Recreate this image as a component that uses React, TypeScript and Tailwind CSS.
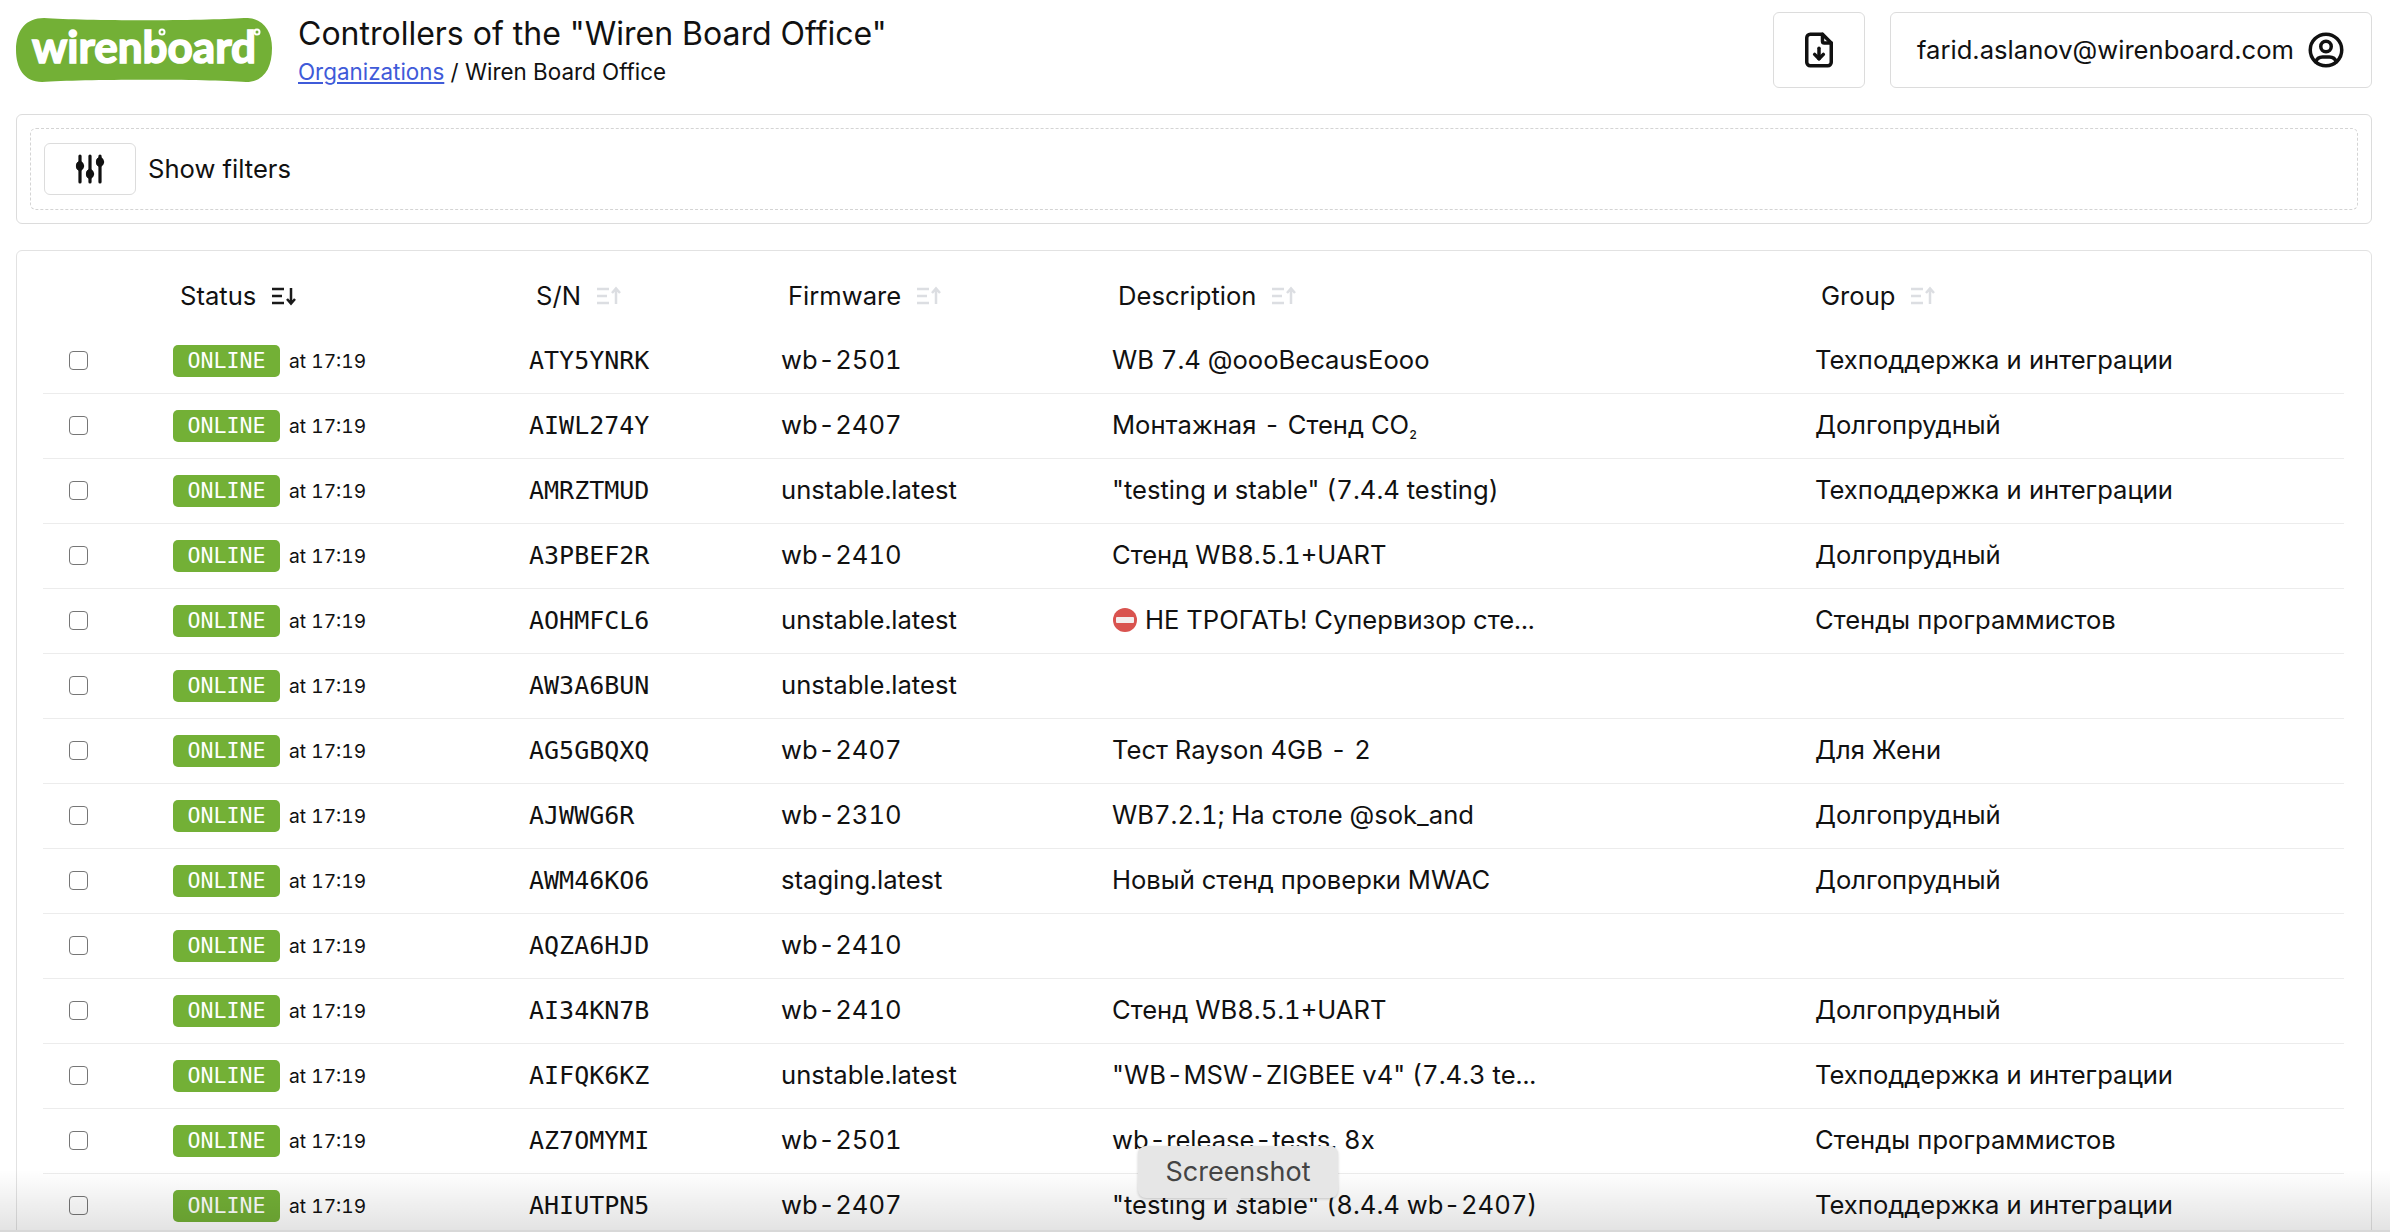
import { Fragment } from "react";
import type { ReactNode } from "react";
import { TbFileDownload, TbUserCircle } from "react-icons/tb";

function H({ t }: { t: string }) {
  const parts = t.split("-");
  return (
    <>
      {parts.map((p, i) => (
        <Fragment key={i}>
          {i > 0 && <span className="mx-[0.5px]">-</span>}
          {p}
        </Fragment>
      ))}
    </>
  );
}

const rows: [string, string, ReactNode, string][] = [
  ["ATY5YNRK", "wb-2501", "WB 7.4 @oooBecausEooo", "Техподдержка и интеграции"],
  ["AIWL274Y", "wb-2407", <><H t="Монтажная - Стенд CO" /><sub className="relative top-[5px] text-[12px] font-medium">2</sub></>, "Долгопрудный"],
  ["AMRZTMUD", "unstable.latest", "\"testing и stable\" (7.4.4 testing)", "Техподдержка и интеграции"],
  ["A3PBEF2R", "wb-2410", "Стенд WB8.5.1+UART", "Долгопрудный"],
  ["AOHMFCL6", "unstable.latest", <span className="flex items-center gap-[8px]"><NoEntry />НЕ ТРОГАТЬ! Супервизор сте...</span>, "Стенды программистов"],
  ["AW3A6BUN", "unstable.latest", "", ""],
  ["AG5GBQXQ", "wb-2407", <H t="Тест Rayson 4GB - 2" />, "Для Жени"],
  ["AJWWG6R", "wb-2310", "WB7.2.1; На столе @sok_and", "Долгопрудный"],
  ["AWM46KO6", "staging.latest", "Новый стенд проверки MWAC", "Долгопрудный"],
  ["AQZA6HJD", "wb-2410", "", ""],
  ["AI34KN7B", "wb-2410", "Стенд WB8.5.1+UART", "Долгопрудный"],
  ["AIFQK6KZ", "unstable.latest", <H t={"\"WB-MSW-ZIGBEE v4\" (7.4.3 te..."} />, "Техподдержка и интеграции"],
  ["AZ7OMYMI", "wb-2501", <H t="wb-release-tests, 8x" />, "Стенды программистов"],
  ["AHIUTPN5", "wb-2407", <H t={"\"testing и stable\" (8.4.4 wb-2407)"} />, "Техподдержка и интеграции"],
];

function NoEntry() {
  return (
    <svg width="24" height="24" viewBox="0 0 24 24" className="ml-[1px] shrink-0">
      <circle cx="12" cy="12" r="12" fill="#d9534f" />
      <rect x="3" y="9" width="18" height="6" rx="1" fill="#f3eeee" />
    </svg>
  );
}

function SortIcon({ active }: { active?: boolean }) {
  const c = active ? "#1a1a1a" : "#dcdee2";
  return (
    <svg width="26" height="20" viewBox="0 0 26 20" fill="none" stroke={c} strokeWidth="2.5" className="shrink-0">
      <path d="M1 3h12M1 10h10M1 17h12" />
      {active ? <path d="M20 2v15M16 13l4 4.5 4-4.5" /> : <path d="M20 18V3M16 7l4-4.5 4 4.5" />}
    </svg>
  );
}

function FilterIcon() {
  return (
    <svg width="30" height="30" viewBox="0 0 30 30" fill="#111" stroke="#111" strokeWidth="3.2" strokeLinecap="round">
      <path d="M5 2v26M15 2v26M25 2v26" fill="none" />
      <ellipse cx="5" cy="12" rx="3.6" ry="4.4" strokeWidth="1" />
      <ellipse cx="15" cy="20" rx="3.6" ry="4.4" strokeWidth="1" />
      <ellipse cx="25" cy="8" rx="3.6" ry="4.4" strokeWidth="1" />
    </svg>
  );
}

function Logo() {
  return (
    <svg width="256" height="64" viewBox="0 0 256 64" className="shrink-0">
      <path
        d="M28 0C70 3 186 3 228 0C246 -1 256 12 256 30C256 50 248 64 230 64C190 61 66 61 26 64C8 64 0 50 0 32C0 12 10 0 28 0Z"
        fill="#73b036"
      />
      <text
        x="128"
        y="45"
        textAnchor="middle"
        fill="#fff"
        stroke="#fff"
        strokeWidth="1.6"
        fontSize="44"
        fontWeight="700"
        fontFamily="'Lato', 'Noto Sans', sans-serif"
      >
        wirenboard
      </text>
      <circle cx="146" cy="14" r="2.5" fill="#73b036" stroke="#fff" strokeWidth="2" />
      <circle cx="241" cy="14" r="2.5" fill="#73b036" stroke="#fff" strokeWidth="2" />
    </svg>
  );
}

export default function App() {
  return (
    <div className="relative h-screen overflow-hidden bg-white text-[#111] font-['Inter',sans-serif]">
      <header className="flex h-[114px] items-start pl-4 pr-[18px]">
        <div className="mt-[18px]">
          <Logo />
        </div>
        <div className="ml-[26px] mt-[14px] min-w-0 flex-1">
          <h1 className="text-[32px] leading-[40px] font-normal">Controllers of the "Wiren Board Office"</h1>
          <div className="mt-[3px] text-[22.4px] leading-[30px]">
            <a className="text-[#3f5bd9] underline">Organizations</a> / Wiren Board Office
          </div>
        </div>
        <button className="mt-3 flex h-[76px] w-[92px] items-center justify-center rounded-[6px] border border-[#dcdcdc]">
          <TbFileDownload size={42} />
        </button>
        <button className="ml-[25px] mt-3 flex h-[76px] w-[482px] items-center justify-between rounded-[6px] border border-[#dcdcdc] pl-[26px] pr-[24px] text-[25.6px]">
          <span>farid.aslanov@wirenboard.com</span>
          <TbUserCircle size={42} />
        </button>
      </header>

      <div className="ml-4 mr-[18px] rounded-[6px] border border-[#dcdcdc] p-[13px]">
        <div className="flex h-[82px] items-center gap-3 rounded-[6px] border border-dashed border-[#d4d4d4] pl-[13px]">
          <button className="flex h-[52px] w-[92px] items-center justify-center rounded-[6px] border border-[#dcdcdc]">
            <FilterIcon />
          </button>
          <span className="text-[25.6px]">Show filters</span>
        </div>
      </div>

      <div className="ml-4 mr-[18px] mt-[26px] rounded-[6px] border border-[#e2e2e2] pl-[26px] pr-[27px]">
        <div className="flex h-[78px] items-center pt-[13px] text-[25.6px]">
          <div className="w-[130px]" />
          <div className="flex w-[356px] items-center gap-[15px] pl-[7px]">Status <SortIcon active /></div>
          <div className="flex w-[252px] items-center gap-[15px] pl-[7px]">S/N <SortIcon /></div>
          <div className="flex w-[331px] items-center gap-[15px] pl-[7px]">Firmware <SortIcon /></div>
          <div className="flex w-[703px] items-center gap-[15px] pl-[6px]">Description <SortIcon /></div>
          <div className="flex items-center gap-[15px] pl-[6px]">Group <SortIcon /></div>
        </div>
        {rows.map(([sn, fw, desc, group]) => (
          <div key={sn} className="flex h-[65px] items-center border-b border-[#ececec] text-[25.6px]">
            <div className="w-[130px] pl-[26px]">
              <span className="mb-[2px] block h-[19px] w-[19px] rounded-[4px] border-[1.5px] border-[#767676] bg-white" />
            </div>
            <div className="flex w-[356px] items-center gap-[9px]">
              <span className="flex h-[32px] w-[107px] items-center justify-center rounded-[5px] bg-[#73b036] font-['DejaVu_Sans_Mono',monospace] text-[21.6px] text-white">
                ONLINE
              </span>
              <span className="mt-[1px] text-[19.2px] tabular-nums">at 17:19</span>
            </div>
            <div className="w-[252px] font-['DejaVu_Sans_Mono',monospace] text-[25px]">{sn}</div>
            <div className="mb-[2px] w-[331px] tabular-nums"><H t={fw} /></div>
            <div className="mb-[2px] w-[703px] whitespace-nowrap tabular-nums">{desc}</div>
            <div className="mb-[2px]">{group}</div>
          </div>
        ))}
      </div>

      <div className="pointer-events-none absolute inset-x-0 bottom-0 h-[62px] border-b-2 border-[#d8d8d8] bg-gradient-to-b from-[#00000000] to-[#0000001c]" />
      <div className="absolute left-[1138px] top-[1146px] flex h-[52px] w-[200px] items-center justify-center rounded-[8px] bg-[#e6e6e6] text-[27px] text-[#444] shadow-[0_1px_3px_rgba(0,0,0,0.2)]">
        Screenshot
        <span className="absolute left-[89px] top-[52px] h-0 w-0 border-x-[7px] border-t-[18px] border-x-transparent border-t-[#e6e6e6]" />
      </div>
    </div>
  );
}
